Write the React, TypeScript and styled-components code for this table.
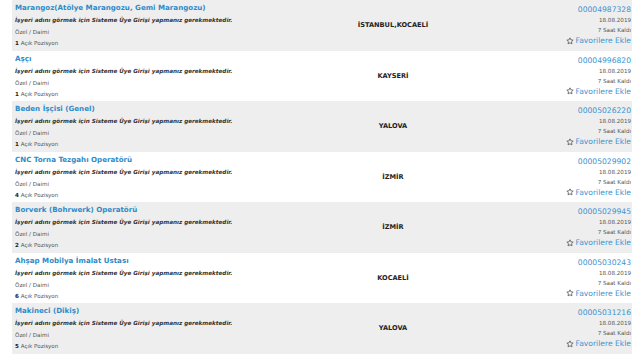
import React from "react";
import styled, { createGlobalStyle } from "styled-components";

type Job = {
  title: string;
  city: string;
  id: string;
  count: number;
};

const jobs: Job[] = [
  { title: "Marangoz(Atölye Marangozu, Gemi Marangozu)", city: "İSTANBUL,KOCAELİ", id: "00004987328", count: 1 },
  { title: "Aşçı", city: "KAYSERİ", id: "00004996820", count: 1 },
  { title: "Beden İşçisi (Genel)", city: "YALOVA", id: "00005026220", count: 1 },
  { title: "CNC Torna Tezgahı Operatörü", city: "İZMİR", id: "00005029902", count: 4 },
  { title: "Borverk (Bohrwerk) Operatörü", city: "İZMİR", id: "00005029945", count: 2 },
  { title: "Ahşap Mobilya İmalat Ustası", city: "KOCAELİ", id: "00005030243", count: 6 },
  { title: "Makineci (Dikiş)", city: "YALOVA", id: "00005031216", count: 5 },
];

const StarIcon = () => (
  <svg width="8" height="8" viewBox="0 0 24 24" fill="none" stroke="#555" strokeWidth="2.4" strokeLinejoin="round">
    <path d="M12 2.5l2.9 6.1 6.6.8-4.9 4.6 1.3 6.6L12 17.3l-5.9 3.3 1.3-6.6-4.9-4.6 6.6-.8z" />
  </svg>
);

const App: React.FC = () => {
  return (
    <Page>
      <GlobalStyle />
      <List>
        {jobs.map((job, i) => (
          <Row key={job.id} $shaded={i % 2 === 0}>
            <Info>
              <Title>{job.title}</Title>
              <Notice>İşyeri adını görmek için Sisteme Üye Girişi yapmanız gerekmektedir.</Notice>
              <Meta>Özel / Daimi</Meta>
              <Meta>
                <b>{job.count}</b> Açık Pozisyon
              </Meta>
            </Info>
            <City>{job.city}</City>
            <Side>
              <JobId>{job.id}</JobId>
              <Meta>18.08.2019</Meta>
              <Meta>7 Saat Kaldı</Meta>
              <FavLink>
                <StarIcon />
                Favorilere Ekle
              </FavLink>
            </Side>
          </Row>
        ))}
      </List>
    </Page>
  );
};

const GlobalStyle = createGlobalStyle`
  html, body {
    margin: 0;
    padding: 0;
    background: #ffffff;
  }
  body {
    font-family: "DejaVu Sans", Verdana, sans-serif;
  }
`;

const Page = styled.div`
  width: 640px;
  height: 354px;
  overflow: hidden;
  padding: 0 8px 0 12px;
  box-sizing: border-box;
`;

const List = styled.div`
  display: flex;
  flex-direction: column;
`;

const Row = styled.div<{ $shaded: boolean }>`
  display: grid;
  grid-template-columns: 330px 96px 1fr;
  align-items: center;
  height: 50.5px;
  box-sizing: border-box;
  padding: 0 1px 0 3px;
  background: ${({ $shaded }) => ($shaded ? "#eeeeee" : "#ffffff")};
`;

const Info = styled.div`
  display: flex;
  flex-direction: column;
  gap: 1px;
`;

const Title = styled.div`
  font-size: 7.1px;
  font-weight: bold;
  color: #2e8bc9;
  line-height: 12px;
`;

const Notice = styled.div`
  font-size: 5.65px;
  font-weight: bold;
  font-style: italic;
  color: #333;
  line-height: 11px;
`;

const Meta = styled.div`
  font-size: 5.6px;
  color: #555;
  line-height: 10px;

  b {
    color: #222;
  }
`;

const City = styled.div`
  text-align: center;
  font-size: 6.6px;
  font-weight: bold;
  color: #222;
`;

const Side = styled.div`
  display: flex;
  flex-direction: column;
  align-items: flex-end;
  text-align: right;
`;

const JobId = styled.div`
  font-size: 7.6px;
  color: #3d92d1;
  line-height: 11px;
`;

const FavLink = styled.div`
  display: flex;
  align-items: center;
  gap: 2px;
  font-size: 7.6px;
  color: #3d92d1;
  line-height: 11px;
`;

export default App;
